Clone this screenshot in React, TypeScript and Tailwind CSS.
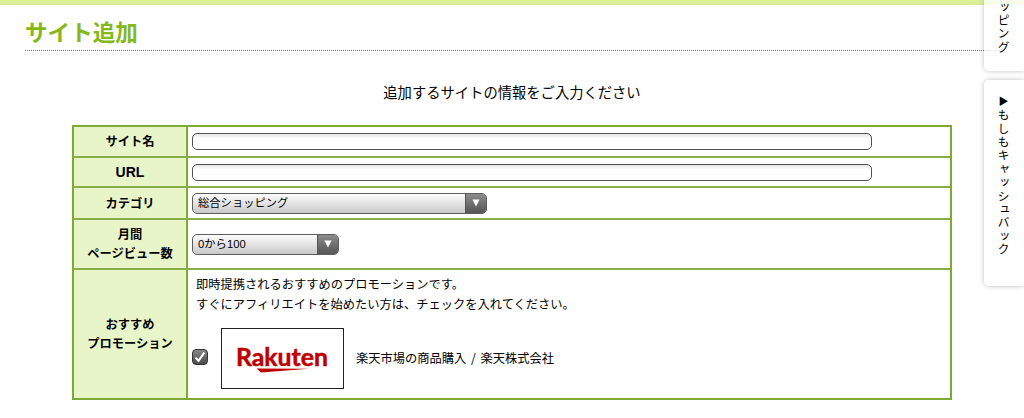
import { useState } from 'react'
import type { ReactNode } from 'react'

const categories = ['総合ショッピング']
const pageViews = ['0から100']

const Row = ({
  label,
  className,
  children,
}: {
  label: ReactNode
  className: string
  children: ReactNode
}) => (
  <div className={`flex border-[#8aaf48] ${className}`}>
    <div className="w-[112px] shrink-0 flex items-center justify-center text-center font-bold leading-[19px] bg-[#e8f5c8] border-r-2 border-[#7fa935] box-content">
      <span>{label}</span>
    </div>
    <div className="flex-1 flex flex-col justify-center pl-1">{children}</div>
  </div>
)

const TextField = ({ name }: { name: string }) => (
  <input
    type="text"
    name={name}
    className="block w-[680px] h-[17px] px-1 rounded-[5px] border border-[#555058] bg-linear-to-b from-[#e4e4e4] via-white via-30% to-white outline-none"
  />
)

const Select = ({
  name,
  options,
  className,
}: {
  name: string
  options: string[]
  className: string
}) => (
  <div
    className={`flex h-[21px] rounded-[5px] border border-[#5c5c5c] overflow-hidden bg-linear-to-b from-[#fdfdfd] to-[#c9c9c9] ${className}`}
  >
    <select
      name={name}
      className="appearance-none flex-1 min-w-0 pl-[5px] text-[11.3px] leading-[19px] text-black bg-transparent outline-none font-['Liberation_Sans','Noto_Sans_CJK_JP',sans-serif]"
    >
      {options.map((option) => (
        <option key={option}>{option}</option>
      ))}
    </select>
    <div className="pointer-events-none w-[21px] shrink-0 flex items-center justify-center border-l border-[#555] bg-linear-to-b from-[#8c8c8c] to-[#555]">
      <svg width="8" height="8" viewBox="0 0 8 8" fill="white">
        <path d="M0.4 0.5H7.6L4 7.5Z" />
      </svg>
    </div>
  </div>
)

const RakutenLogo = () => (
  <svg width="121" height="59" viewBox="0 0 121 59" fill="#bf0000">
    <text
      x="14"
      y="37"
      textLength="92"
      lengthAdjust="spacingAndGlyphs"
      fontFamily="Lato, sans-serif"
      fontSize="25"
      fontWeight="700"
      stroke="#bf0000"
      strokeWidth="0.5"
    >
      Rakuten
    </text>
    <path d="M34.5 39.6L87 39.8L39 43.6Z" />
  </svg>
)

const App = () => {
  const [checked, setChecked] = useState(true)

  return (
    <div className="relative w-[1024px] h-[418px] overflow-hidden bg-white text-black text-[12.25px] font-['Noto_Sans_CJK_JP','Liberation_Sans',sans-serif]">
      <div className="h-[5px] bg-linear-to-b from-[#dcf296] to-[#d8ec98]" />
      <header className="ml-[25px] mr-[24px] h-[46px] pt-[11px] border-b border-dotted border-[#777]">
        <h1 className="text-[22.6px] leading-8 font-bold text-[#86b81b]">サイト追加</h1>
      </header>
      <main className="pt-[31px]">
        <p className="text-center text-[14.3px] leading-5">追加するサイトの情報をご入力ください</p>
        <form className="ml-[72px] mt-[23px] w-[880px] h-[275px] border-2 border-[#7fa935]">
          <Row label="サイト名" className="h-[31px] border-b-2">
            <TextField name="site" />
          </Row>
          <Row
            label={
              <span className="text-[14px] font-['Liberation_Sans',sans-serif]">URL</span>
            }
            className="h-[30px] border-b-2"
          >
            <TextField name="url" />
          </Row>
          <Row label="カテゴリ" className="h-[32px] border-b-2">
            <Select name="category" options={categories} className="w-[295px]" />
          </Row>
          <Row
            label={
              <>
                月間
                <br />
                ページビュー数
              </>
            }
            className="h-[50px] border-b-2"
          >
            <Select name="pv" options={pageViews} className="w-[147px]" />
          </Row>
          <Row
            label={
              <>
                おすすめ
                <br />
                プロモーション
              </>
            }
            className="h-[128px]"
          >
            <p className="pl-1 leading-5">
              即時提携されるおすすめのプロモーションです。
              <br />
              すぐにアフィリエイトを始めたい方は、チェックを入れてください。
            </p>
            <label className="mt-3.5 mb-[5px] flex items-center">
              <input
                type="checkbox"
                checked={checked}
                onChange={() => setChecked(!checked)}
                className="sr-only"
              />
              <span className="size-4 mb-[3px] rounded-[4px] border border-[#333] bg-linear-to-b from-[#888] to-[#4a4a4a] flex items-center justify-center">
                {checked && (
                  <svg width="14" height="14" viewBox="0 0 14 14" fill="none" stroke="white" strokeWidth="2">
                    <path d="M2.5 7.6L5.5 10.8L11.3 2.6" />
                  </svg>
                )}
              </span>
              <span className="ml-[13px] w-[123px] h-[61px] border border-[#222] bg-white">
                <RakutenLogo />
              </span>
              <span className="ml-3 [word-spacing:2px]">楽天市場の商品購入 / 楽天株式会社</span>
            </label>
          </Row>
        </form>
      </main>

      {/* side tabs floating over the right edge */}
      <aside className="absolute top-0 right-0 w-10 h-[286px] flex flex-col gap-[9px] text-[12px] leading-[38px] tracking-[1.4px]">
        <div className="h-[71px] flex items-end rounded-bl-[5px] bg-white/80 shadow-[0_0_5px_rgba(0,0,0,0.25)] pb-4">
          <span className="[writing-mode:vertical-rl] [text-orientation:upright]">ッピング</span>
        </div>
        <div className="flex-1 flex items-start rounded-l-[5px] bg-white/95 shadow-[0_0_5px_rgba(0,0,0,0.25)] pt-4">
          <span className="[writing-mode:vertical-rl] [text-orientation:upright]">
            <span className="text-[10px] tracking-[3.6px]">▶</span>もしもキャッシュバック
          </span>
        </div>
      </aside>
    </div>
  )
}

export default App
